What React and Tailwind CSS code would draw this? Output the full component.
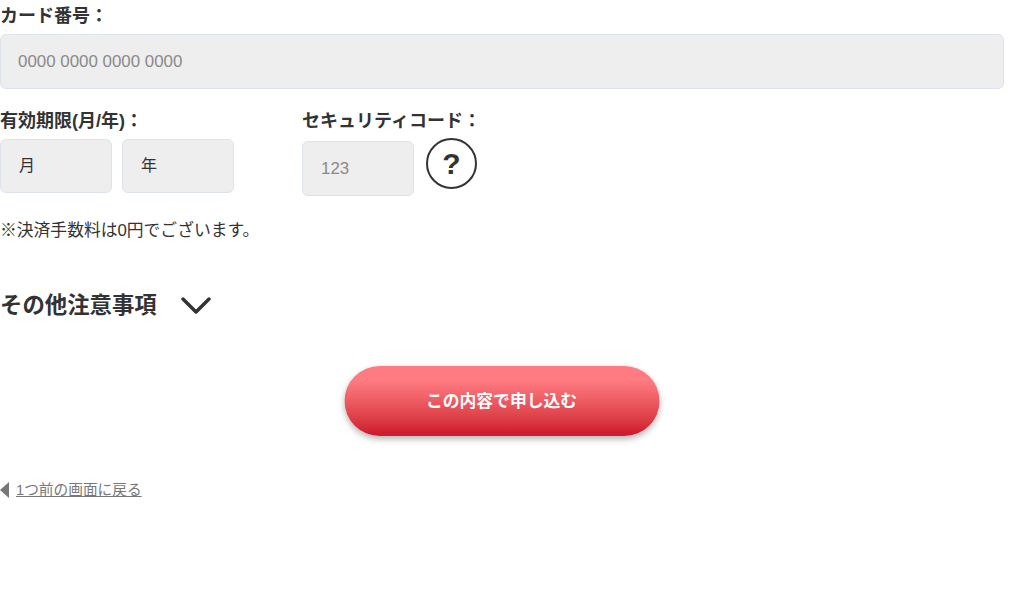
export default function App() {
  return (
    <div className="w-[1024px] h-[597px] bg-white overflow-hidden font-['Liberation_Sans','Noto_Sans_CJK_JP',sans-serif] text-[#333]">
      <div className="w-[1004px] flex flex-col">
        <label className="block h-[34px] text-[18px] leading-[32px] font-bold">カード番号：</label>
        <input
          readOnly
          placeholder="0000 0000 0000 0000"
          className="w-full h-[55px] px-[17px] rounded-[6px] border border-[#dde3ee] bg-[#eeeeee] text-[16.9px] outline-none placeholder:text-[#8a8a8a]"
        />
        <div className="flex mt-[20px]">
          <div className="w-[302px] flex flex-col">
            <label className="h-[29.5px] text-[18px] leading-[25px] font-bold">有効期限(月/年)：</label>
            <div className="flex gap-[10px]">
              <div className="w-[112px] h-[54.5px] px-[18px] flex items-center rounded-[6px] border border-[#dde3ee] bg-[#eeeeee] text-[16px]">月</div>
              <div className="w-[112px] h-[54.5px] px-[18px] flex items-center rounded-[6px] border border-[#dde3ee] bg-[#eeeeee] text-[16px]">年</div>
            </div>
          </div>
          <div className="flex flex-col">
            <label className="h-[29px] text-[18px] leading-[25px] font-bold">セキュリティコード：</label>
            <div className="flex items-start gap-[12px]">
              <input
                readOnly
                placeholder="123"
                className="w-[112px] h-[55px] mt-[3px] px-[18px] rounded-[6px] border border-[#dde3ee] bg-[#eeeeee] text-[16.9px] outline-none placeholder:text-[#8a8a8a]"
              />
              <div className="w-[51px] h-[51px] rounded-full border-2 border-[#333] flex items-center justify-center text-[30px] font-bold leading-none">?</div>
            </div>
          </div>
        </div>
        <p className="mt-[23px] text-[16.8px] leading-[24px]">※決済手数料は0円でございます。</p>
        <div className="mt-[47px] flex items-center gap-[24px]">
          <h2 className="text-[22.4px] leading-[32px] font-bold">その他注意事項</h2>
          <svg width="30" height="18" viewBox="0 0 30 18" fill="none" stroke="#333" strokeWidth="3.5" strokeLinecap="round" strokeLinejoin="round">
            <path d="M2 2 L15 15 L28 2" />
          </svg>
        </div>
        <div className="mt-[44px] flex justify-center">
          <button className="w-[315px] h-[70px] pt-[2px] -translate-x-[0.5px] rounded-full bg-gradient-to-b from-[#ff7b82] from-20% to-[#d01c30] to-95% text-white text-[16.8px] font-bold shadow-[0_3px_6px_rgba(0,0,0,0.3)]">この内容で申し込む</button>
        </div>
        <div className="mt-[43px] flex items-center gap-[7px] text-[14.7px] text-[#777]">
          <svg width="9" height="16" viewBox="0 0 9 16" fill="#777"><path d="M9 0 V16 L0 8 Z" /></svg>
          <a className="underline">1つ前の画面に戻る</a>
        </div>
      </div>
    </div>
  );
}
